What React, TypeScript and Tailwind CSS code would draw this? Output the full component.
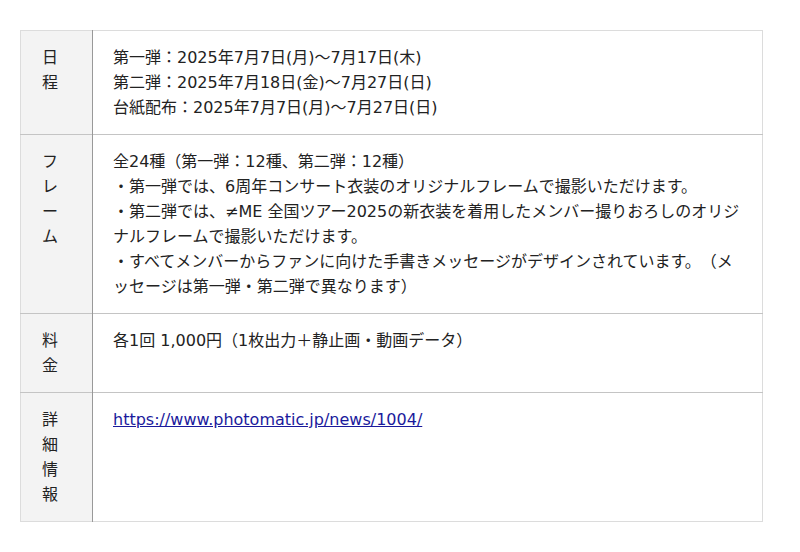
const rows = [
  {
    label: ["日", "程"],
    body: (
      <>
        第一弾：2025年7月7日(月)〜7月17日(木)
        <br />
        第二弾：2025年7月18日(金)〜7月27日(日)
        <br />
        台紙配布：2025年7月7日(月)〜7月27日(日)
      </>
    ),
  },
  {
    label: ["フ", "レ", "ー", "ム"],
    body: (
      <>
        全24種（第一弾：12種、第二弾：12種）
        <br />
        ・第一弾では、6周年コンサート衣装のオリジナルフレームで撮影いただけます。
        <br />
        ・第二弾では、≠ME 全国ツアー2025の新衣装を着用したメンバー撮りおろしのオリジナルフレームで撮影いただけます。
        <br />
        ・すべてメンバーからファンに向けた手書きメッセージがデザインされています。（メッセージは第一弾・第二弾で異なります）
      </>
    ),
  },
  {
    label: ["料", "金"],
    body: <>各1回 1,000円（1枚出力＋静止画・動画データ）</>,
  },
  {
    label: ["詳", "細", "情", "報"],
    body: (
      <a href="#" className="text-[#1a1a9c] underline">
        https://www.photomatic.jp/news/1004/
      </a>
    ),
  },
];

export default function App() {
  return (
    <div
      className="min-h-[552px] bg-white px-5 pt-[30px] text-[16px] leading-[25px] text-[#222] [text-spacing-trim:space-all]"
      style={{ fontFamily: '"DejaVu Sans", "Noto Sans CJK JP", sans-serif' }}
    >
      <table className="w-[743px] border-collapse border border-[#dcdcdc]">
        <tbody>
          {rows.map((row, i) => (
            <tr key={i} className="border-b border-[#c4c4c4] last:border-[#dcdcdc]">
              <th className="w-[72px] border-r border-[#999] bg-[#f3f3f3] py-[14px] pl-[21px] text-left align-top font-normal">
                {row.label.map((c) => (
                  <div key={c}>{c}</div>
                ))}
              </th>
              <td className="px-5 py-[14px] align-top">{row.body}</td>
            </tr>
          ))}
        </tbody>
      </table>
    </div>
  );
}
